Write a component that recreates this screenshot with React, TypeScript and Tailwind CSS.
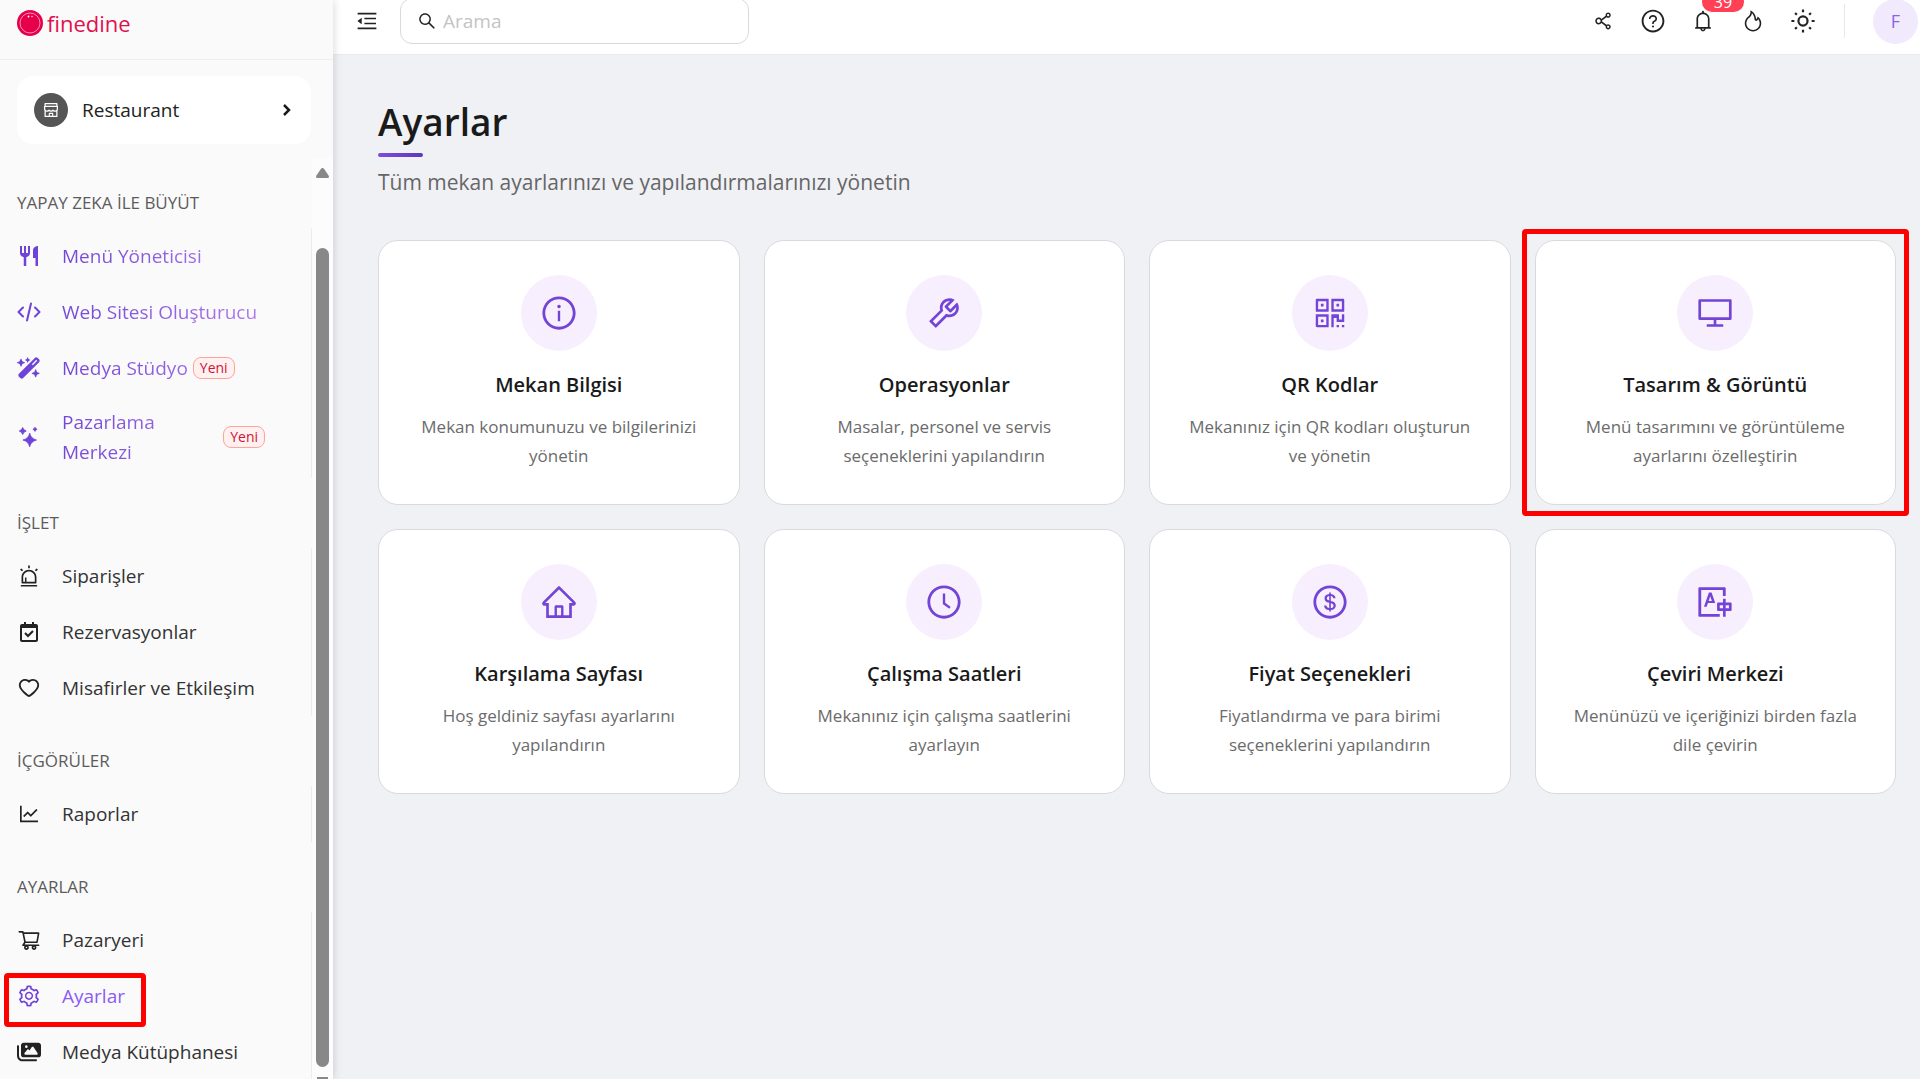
import React, { useState } from 'react';
import clsx from 'clsx';
import type { IconType } from 'react-icons';
import {
  AiOutlineAlert, AiOutlineBell, AiOutlineClockCircle, AiOutlineDesktop, AiOutlineDollar,
  AiOutlineFire, AiOutlineHeart, AiOutlineHome, AiOutlineInfoCircle, AiOutlineLineChart,
  AiOutlineMenuFold, AiOutlineQrcode, AiOutlineQuestionCircle, AiOutlineSearch, AiOutlineSetting,
  AiOutlineShareAlt, AiOutlineShop, AiOutlineShoppingCart, AiOutlineTool, AiOutlineTranslation,
} from 'react-icons/ai';
import { BiCalendarCheck } from 'react-icons/bi';
import { FaImages, FaWandMagicSparkles } from 'react-icons/fa6';
import { MdRestaurant } from 'react-icons/md';

// --- Types ---
interface NavItem {
  label: string;
  icon: IconType | typeof CodeIcon;
  badge?: string;
  active?: boolean;
}

interface NavGroup {
  title: string;
  accent?: boolean;
  items: NavItem[];
}

interface SettingCard {
  title: string;
  text: string;
  icon: IconType;
  marked?: boolean;
}

// --- Icons ---
function CodeIcon({ className }: { className?: string }) {
  return (
    <svg viewBox="0 0 24 24" fill="none" stroke="currentColor" strokeWidth="2" strokeLinecap="round" strokeLinejoin="round" className={className}>
      <path d="M18 7.5 22.5 12 18 16.5M6 16.5 1.5 12 6 7.5M14 3.5 10 20.5" />
    </svg>
  );
}

function StarsIcon({ className }: { className?: string }) {
  return (
    <svg viewBox="0 0 24 24" fill="currentColor" stroke="currentColor" strokeWidth="0.8" strokeLinejoin="round" className={className}>
      <path d="M12.700 8.200Q14 13.700 19.500 15 14 16.300 12.700 21.800 11.400 16.300 5.900 15 11.400 13.700 12.700 8.200z" />
      <path d="M5.700 2.500Q6.500 5.200 9.200 6 6.500 6.800 5.700 9.500 4.900 6.800 2.200 6 4.900 5.200 5.700 2.500z" />
      <path d="M18 2.200Q18.500 3.800 20.100 4.300 18.500 4.800 18 6.400 17.500 4.800 15.900 4.300 17.500 3.800 18 2.200z" />
    </svg>
  );
}

function SunIcon({ className }: { className?: string }) {
  return (
    <svg viewBox="0 0 24 24" fill="none" stroke="currentColor" strokeWidth="2" className={className}>
      <circle cx="12" cy="12" r="4.2" />
      <path d="M12 1.300v2.700M12 20v2.700M1.300 12H4M20 12h2.700M4.700 4.700l1.600 1.600M17.700 17.700l1.600 1.600M4.700 19.300l1.600-1.600M17.700 6.300l1.600-1.600" />
    </svg>
  );
}

function LogoMark() {
  return (
    <svg viewBox="0 0 26 26" className="size-[26px]">
      <circle cx="13" cy="13" r="13" fill="#e6004c" />
      <circle cx="13" cy="13" r="10" fill="none" stroke="#ff9dbd" strokeWidth="0.9" />
      <circle cx="11.500" cy="6.500" r="0.9" fill="#fff" />
      <circle cx="15" cy="6.500" r="0.7" fill="#fff" />
    </svg>
  );
}

// --- Data ---
const navGroups: NavGroup[] = [
  {
    title: 'YAPAY ZEKA İLE BÜYÜT',
    accent: true,
    items: [
      { label: 'Menü Yöneticisi', icon: MdRestaurant },
      { label: 'Web Sitesi Oluşturucu', icon: CodeIcon },
      { label: 'Medya Stüdyo', icon: FaWandMagicSparkles, badge: 'Yeni' },
      { label: 'Pazarlama Merkezi', icon: StarsIcon, badge: 'Yeni' },
    ],
  },
  {
    title: 'İŞLET',
    items: [
      { label: 'Siparişler', icon: AiOutlineAlert },
      { label: 'Rezervasyonlar', icon: BiCalendarCheck },
      { label: 'Misafirler ve Etkileşim', icon: AiOutlineHeart },
    ],
  },
  {
    title: 'İÇGÖRÜLER',
    items: [{ label: 'Raporlar', icon: AiOutlineLineChart }],
  },
  {
    title: 'AYARLAR',
    items: [
      { label: 'Pazaryeri', icon: AiOutlineShoppingCart },
      { label: 'Ayarlar', icon: AiOutlineSetting, active: true },
      { label: 'Medya Kütüphanesi', icon: FaImages },
    ],
  },
];

const cards: SettingCard[] = [
  { title: 'Mekan Bilgisi', text: 'Mekan konumunuzu ve bilgilerinizi yönetin', icon: AiOutlineInfoCircle },
  { title: 'Operasyonlar', text: 'Masalar, personel ve servis seçeneklerini yapılandırın', icon: AiOutlineTool },
  { title: 'QR Kodlar', text: 'Mekanınız için QR kodları oluşturun ve yönetin', icon: AiOutlineQrcode },
  { title: 'Tasarım & Görüntü', text: 'Menü tasarımını ve görüntüleme ayarlarını özelleştirin', icon: AiOutlineDesktop, marked: true },
  { title: 'Karşılama Sayfası', text: 'Hoş geldiniz sayfası ayarlarını yapılandırın', icon: AiOutlineHome },
  { title: 'Çalışma Saatleri', text: 'Mekanınız için çalışma saatlerini ayarlayın', icon: AiOutlineClockCircle },
  { title: 'Fiyat Seçenekleri', text: 'Fiyatlandırma ve para birimi seçeneklerini yapılandırın', icon: AiOutlineDollar },
  { title: 'Çeviri Merkezi', text: 'Menünüzü ve içeriğinizi birden fazla dile çevirin', icon: AiOutlineTranslation },
];

// --- Sidebar ---
function NavLink({ item, accent }: { item: NavItem; accent?: boolean }) {
  const Icon = item.icon;
  return (
    <a
      href="#"
      aria-current={item.active ? 'page' : undefined}
      className={clsx(
        'relative flex min-h-14 items-center pl-[17px] text-[19px] leading-[30px]',
        item.badge ? 'py-[11px] pr-[46px]' : 'pr-4',
        item.active ? 'text-[#8b5cf6]' : 'text-[#333]',
      )}
    >
      <Icon className={clsx('mr-[21px] size-6 shrink-0', accent || item.active ? 'text-[#6f42d8]' : 'text-[#222]')} />
      {accent ? (
        <span className="bg-linear-to-r from-[#7446d4] to-[#b07aee] to-[200px] bg-clip-text font-medium text-transparent">{item.label}</span>
      ) : (
        <span>{item.label}</span>
      )}
      {item.badge && (
        <span className="ml-[5px] shrink-0 rounded-lg border border-[#ffa39e] bg-[#fff1f0] px-[6px] text-sm leading-5 text-[#cf1339]">
          {item.badge}
        </span>
      )}
      {item.active && <span className="absolute left-1 top-[5px] h-[54px] w-[142px] rounded-sm border-[5px] border-[#ff0000]" />}
    </a>
  );
}

function Sidebar() {
  return (
    <aside className="z-10 flex w-[333px] shrink-0 flex-col overflow-hidden bg-[#fafafa] shadow-[1px_0_8px_rgba(0,0,0,0.14)]">
      <div className="h-[60px] shrink-0 border-b border-[#eee] px-[17px] pt-[5px]">
        <a href="#" className="flex items-center gap-1">
          <LogoMark />
          <span className="text-[22px] leading-9 text-[#e0104f]">finedine</span>
        </a>
      </div>

      <button className="mr-[22px] ml-[17px] mt-4 flex h-[68px] shrink-0 items-center rounded-2xl bg-white px-[17px] text-left">
        <span className="flex size-[34px] items-center justify-center rounded-full bg-[#555] text-white">
          <AiOutlineShop className="size-[18px]" />
        </span>
        <span className="ml-[14px] flex-1 text-[19px] text-[#222]">Restaurant</span>
        <svg viewBox="0 0 10 12" fill="none" stroke="#1a1a1a" strokeWidth="2.500" className="mr-0.5 h-3 w-2.5">
          <path d="m2 1 5 5-5 5" />
        </svg>
      </button>

      <div className="mt-[14px] flex min-h-0 flex-1">
        <nav className="min-w-0 flex-1 overflow-hidden">
          {navGroups.map((group) => (
            <div key={group.title}>
              <h2 className="h-[70px] pl-[17px] pt-8 text-[17px] leading-[26px] text-[#5c5c5c]">{group.title}</h2>
              <div className="border-r border-[#ececec]">
                {group.items.map((item) => (
                  <NavLink key={item.label} item={item} accent={group.accent} />
                ))}
              </div>
            </div>
          ))}
        </nav>
        {/* scrollbar track */}
        <div className="flex w-[21px] shrink-0 flex-col items-center bg-[#fcfcfc] pt-[10px]">
          <svg viewBox="0 0 13 10" className="h-2.5 w-[13px] shrink-0" fill="#888">
            <path d="M6.500 0c.8 0 1.300.6 1.800 1.300L12.600 7.600C13.300 8.800 12.800 10 11.500 10H1.500C.2 10-.3 8.800.4 7.600L4.700 1.300C5.200.6 5.700 0 6.500 0z" />
          </svg>
          <div className="mt-[70px] mb-[10px] w-[13px] flex-1 rounded-full bg-[#888]" />
          <div className="h-0.5 w-[11px] bg-[#888]" />
        </div>
      </div>
    </aside>
  );
}

// --- Header ---
function Header() {
  const [query, setQuery] = useState('');

  return (
    <header className="flex h-[54px] shrink-0 items-center overflow-hidden bg-white pb-3 pl-[22px] pr-0.5 text-[#222]">
      <button aria-label="Menü">
        <AiOutlineMenuFold className="size-6" />
      </button>
      <label className="ml-[21px] flex h-[46px] w-[349px] shrink-0 items-center rounded-xl border border-[#d9d9d9] px-4">
        <AiOutlineSearch className="size-5 shrink-0" />
        <input
          type="text"
          aria-label="Arama"
          placeholder="Arama"
          value={query}
          onChange={(e) => setQuery(e.target.value)}
          className="ml-1.5 min-w-0 flex-1 bg-transparent text-[19px] outline-none placeholder:text-[#c4c4c4]"
        />
      </label>

      <div className="ml-auto flex items-center gap-6">
        <button aria-label="Paylaş"><AiOutlineShareAlt className="size-[26px] p-0.5" /></button>
        <button aria-label="Yardım"><AiOutlineQuestionCircle className="size-[26px]" /></button>
        <button aria-label="Bildirimler" className="relative">
          <AiOutlineBell className="size-[26px] p-px" />
          <span className="absolute -top-4 left-3 w-[42px] rounded-[10px] bg-[#ff4055] text-center text-base leading-5 font-medium text-white">
            39
          </span>
        </button>
        <button aria-label="Öne çıkanlar"><AiOutlineFire className="size-[26px] p-px" /></button>
        <button aria-label="Tema"><SunIcon className="size-[26px]" /></button>
        <span className="mx-1 h-[34px] w-px bg-[#e8e8e8]" />
        <button className="size-[45px] rounded-full bg-[#f1eafd] text-lg text-[#8b62e8]">F</button>
      </div>
    </header>
  );
}

export default function App() {
  return (
    <div className="flex h-screen w-full overflow-hidden bg-[#f0f1f5] font-['Open_Sans','Noto_Sans',sans-serif]">
      <Sidebar />

      <div className="flex min-w-0 flex-1 flex-col">
        <Header />

        <main className="flex-1 overflow-hidden border-t border-[#e9eaee] pb-6 pl-[45px] pr-6 pt-[42px]">
          <h1 className="text-[37px] leading-[50px] font-semibold text-[#1a1a1a]">Ayarlar</h1>
          <div className="mt-1.5 h-1 w-[45px] rounded-sm bg-linear-to-r from-[#7c4ddb] to-[#5f38b8]" />
          <p className="mt-[10px] text-[21px] leading-[30px] text-[#666]">
            Tüm mekan ayarlarınızı ve yapılandırmalarınızı yönetin
          </p>

          <div className="mt-[43px] grid grid-cols-4 gap-6">
            {cards.map((card) => (
              <a
                key={card.title}
                href="#"
                className="relative flex flex-col items-center rounded-[20px] border border-[#d9dadd] bg-white px-8 py-[34px] text-center"
              >
                <span className="flex size-[76px] items-center justify-center rounded-full bg-[#f7effe] text-[#7344d6]">
                  <card.icon className="size-[38px]" />
                </span>
                <h3 className="mt-5 text-xl leading-7 font-semibold text-[#1a1a1a]">{card.title}</h3>
                <p className="mt-[13px] text-[17px] leading-[29px] text-[#6b6b6b]">{card.text}</p>
                {card.marked && <span className="absolute -inset-x-3.5 -inset-y-3 rounded-sm border-[5px] border-[#ff0000]" />}
              </a>
            ))}
          </div>
        </main>
      </div>
    </div>
  );
}
